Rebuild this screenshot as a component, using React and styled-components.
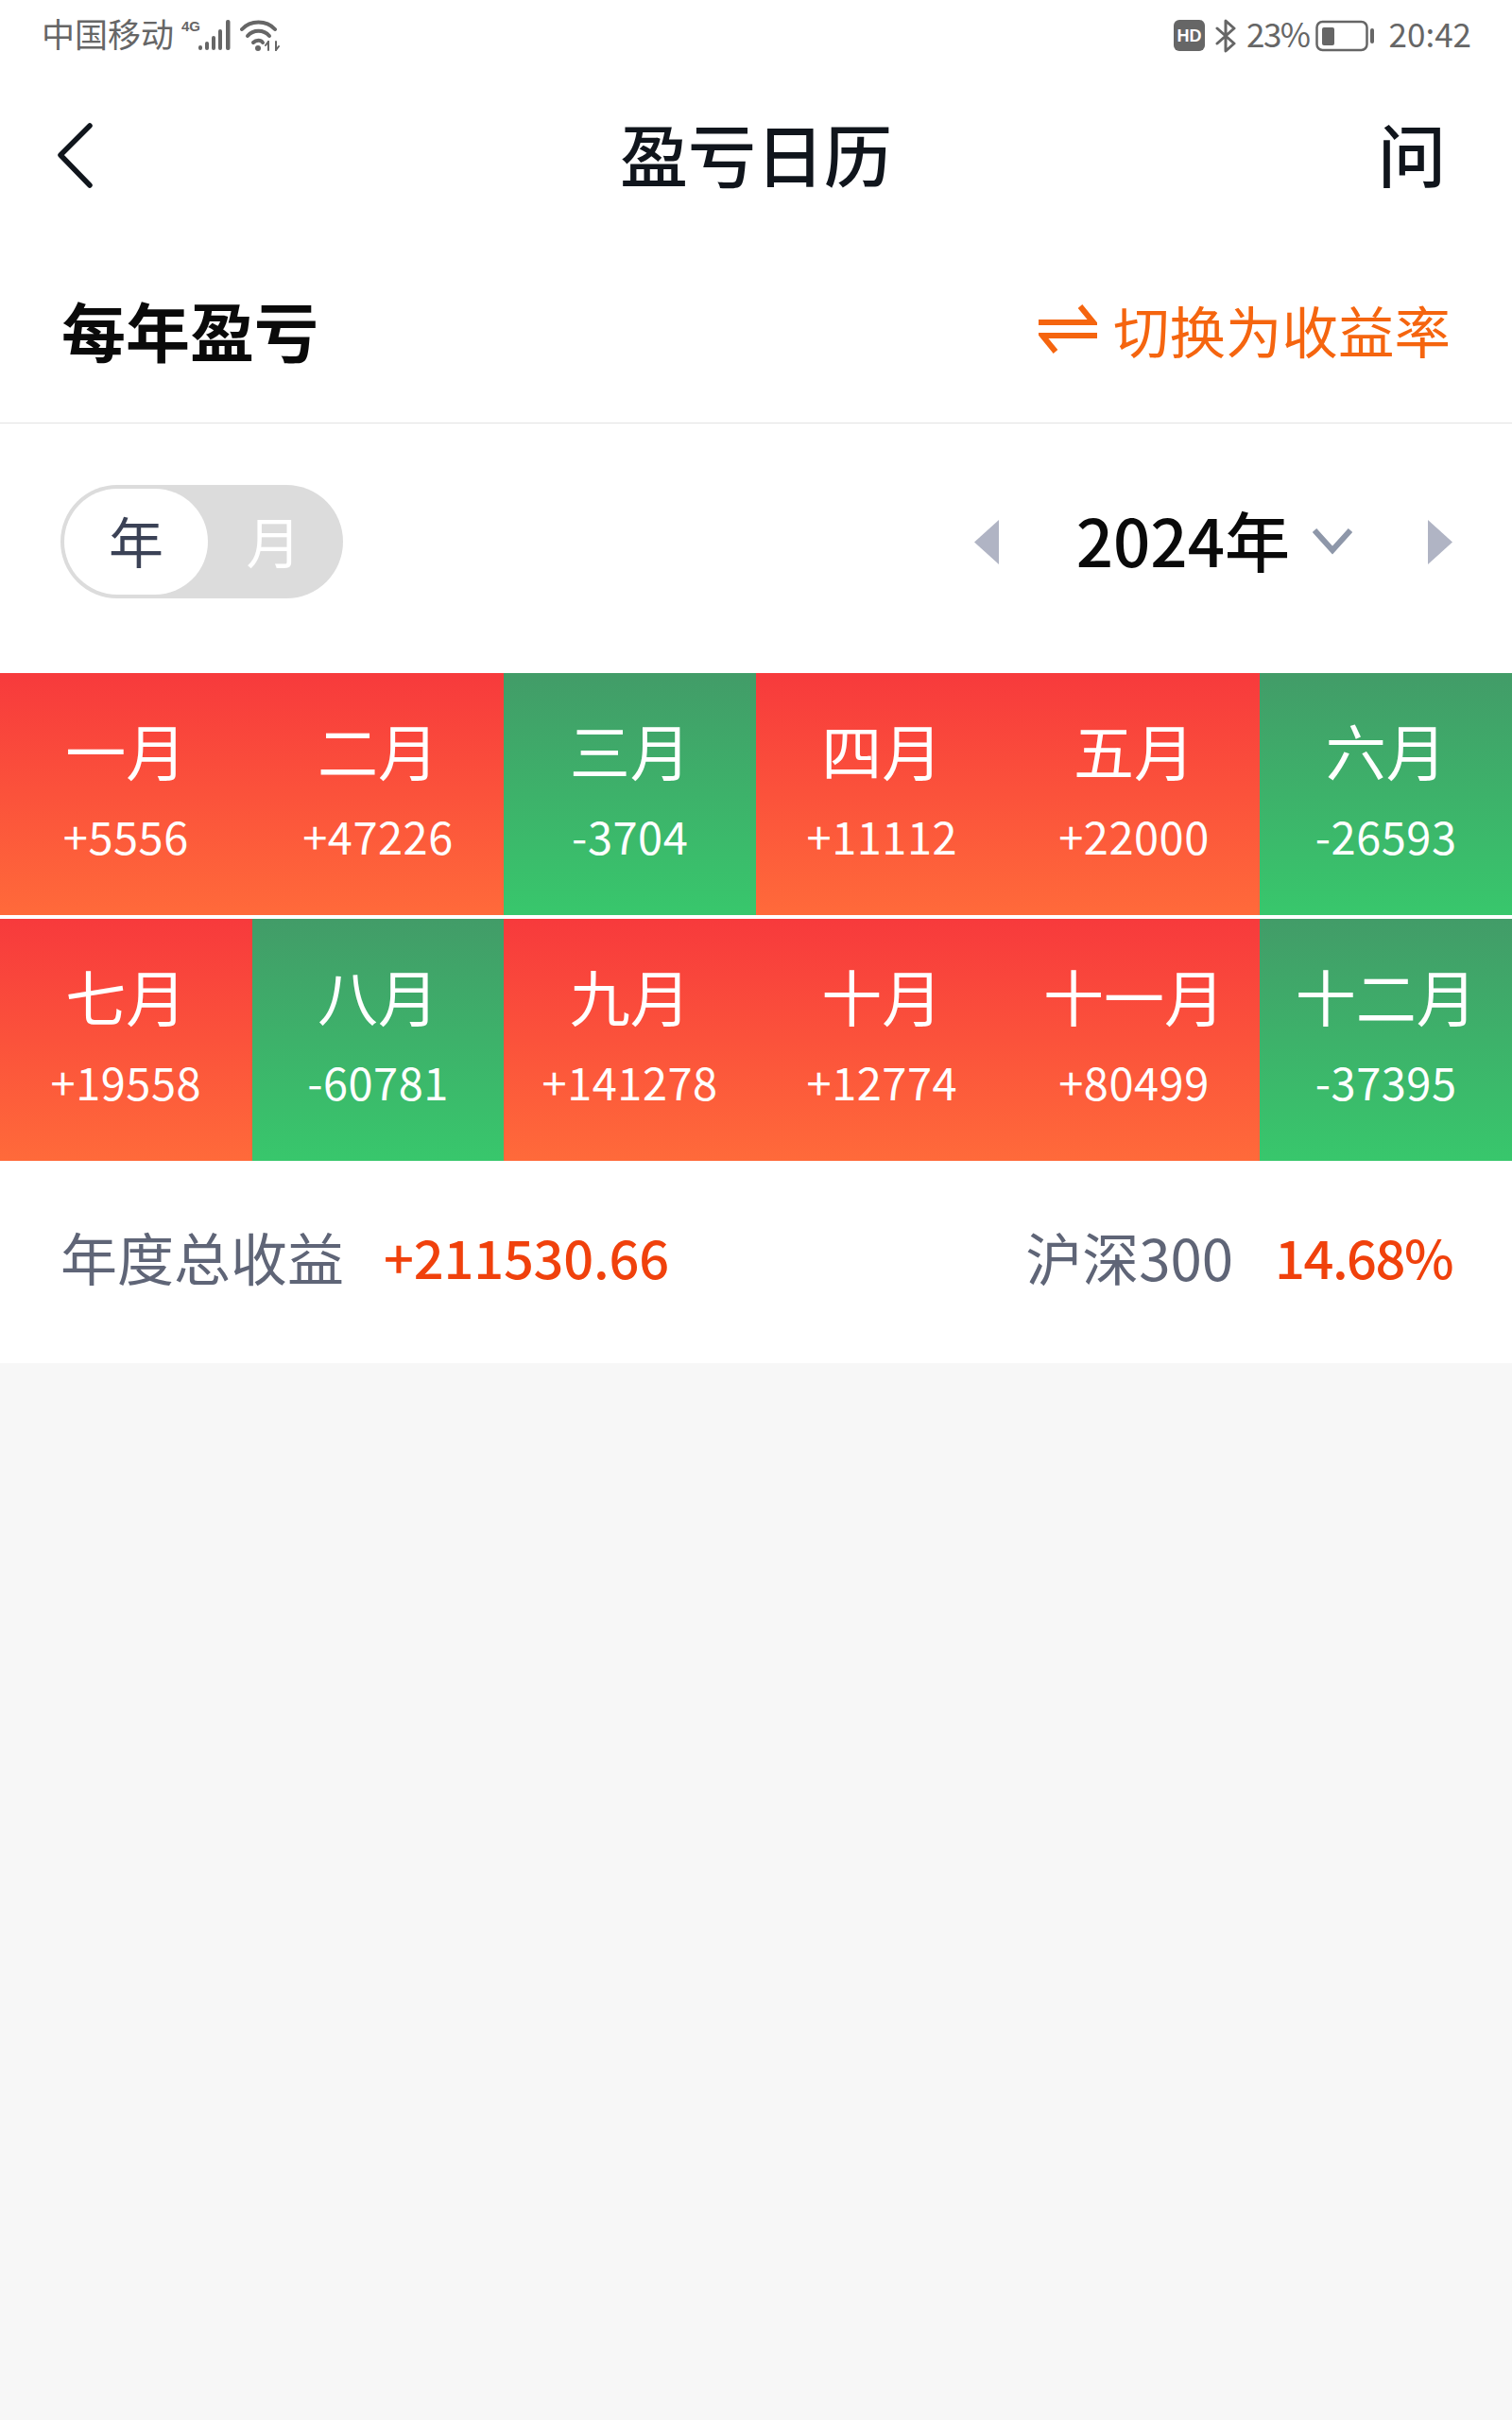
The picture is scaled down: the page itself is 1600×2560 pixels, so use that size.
import styled, { createGlobalStyle } from "styled-components"

const GlobalStyle = createGlobalStyle`
  html, body {
    margin: 0;
    padding: 0;
    background: #f7f7f7;
  }
  body {
    font-family: "Noto Sans CJK SC", "Noto Sans", sans-serif;
  }
`

const Page = styled.div`
  width: 1600px;
  height: 2560px;
  background: #f7f7f7;
`

const Panel = styled.div`
  background: #fff;
`

const StatusBar = styled.div`
  height: 75px;
  padding: 0 43px 0 44px;
  display: flex;
  align-items: center;
  justify-content: space-between;
  color: #666;
  font-size: 35px;
`

const StatusGroup = styled.div`
  display: flex;
  align-items: center;
  gap: ${props => props.$gap}px;
`

const StatusText = styled.span`
  margin-bottom: 5px;
  line-height: 40px;
  letter-spacing: ${props => props.$tight ? "-1.5px" : "0"};
`

const BatterySvg = styled.svg`
  margin: 0 5px 0 -5px;
`

const NavBar = styled.div`
  height: 180px;
  padding: 0 70px 0 58px;
  display: grid;
  grid-template-columns: 1fr auto 1fr;
  align-items: center;
`

const NavTitle = styled.div`
  margin: 0 0 8px 12px;
  font-size: 72px;
  font-weight: 500;
  color: #10151c;
  line-height: 90px;
`

const NavHelp = styled.div`
  margin-bottom: 8px;
  justify-self: end;
  font-size: 72px;
  font-weight: 500;
  color: #10151c;
  line-height: 90px;
`

const SectionHead = styled.div`
  height: 186px;
  padding: 0 65px 6px;
  display: flex;
  align-items: center;
  justify-content: space-between;
  border-bottom: 1px solid #e3e3e3;
`

const SectionTitle = styled.div`
  font-size: 68px;
  font-weight: 700;
  color: #0a0a0a;
`

const SwitchLink = styled.div`
  display: flex;
  align-items: center;
  gap: 17px;
  font-size: 59.5px;
  color: #f5650f;
`

const FilterRow = styled.div`
  height: 264px;
  padding: 0 63px 14px 64px;
  box-sizing: border-box;
  display: flex;
  align-items: center;
  justify-content: space-between;
`

const Toggle = styled.div`
  width: 299px;
  height: 120px;
  box-sizing: border-box;
  padding: 4px;
  border-radius: 60px;
  background: #dcdcdc;
  display: flex;
  align-items: center;
`

const ToggleItem = styled.div`
  width: ${props => (props.$active ? 152 : 139)}px;
  height: 112px;
  padding-bottom: 4px;
  box-sizing: border-box;
  border-radius: 56px;
  display: flex;
  align-items: center;
  justify-content: center;
  font-size: 58px;
  background: ${props => (props.$active ? "#fff" : "transparent")};
  color: ${props => (props.$active ? "#3b4256" : "#fff")};
`

const YearPicker = styled.div`
  display: flex;
  align-items: center;
`

const YearLabel = styled.div`
  margin: 0 24px 6px 82px;
  font-size: 69px;
  font-weight: 500;
  color: #0a0a0a;
  line-height: 90px;
`

const NextArrow = styled.svg`
  margin-left: 80px;
`

const MonthGrid = styled.div`
  display: grid;
  grid-template-columns: repeat(6, 1fr);
  row-gap: 4px;
`

const MonthCell = styled.div`
  height: 256px;
  display: flex;
  flex-direction: column;
  align-items: center;
  padding-top: 35px;
  box-sizing: border-box;
  color: #fff;
  background: ${props =>
    props.$gain
      ? "linear-gradient(180deg, #f73a3c 0%, #ff6a3a 100%)"
      : "linear-gradient(180deg, #429c68 0%, #38c76c 100%)"};
`

const MonthName = styled.div`
  font-size: 64px;
  font-weight: 400;
  line-height: 90px;
`

const MonthValue = styled.div`
  margin-top: 17px;
  font-size: 47px;
  line-height: 60px;
  letter-spacing: 0.5px;
`

const SummaryRow = styled.div`
  height: 214px;
  padding: 0 63px 14px 64px;
  box-sizing: border-box;
  display: flex;
  align-items: center;
  justify-content: space-between;
`

const SummaryGroup = styled.div`
  display: flex;
  align-items: center;
  gap: ${props => props.$gap}px;
`

const SummaryLabel = styled.div`
  font-size: 60px;
  color: #5f6577;
`

const SummaryValue = styled.div`
  font-size: 56px;
  font-weight: 500;
  color: #f0410c;
  letter-spacing: ${props => props.$tight ? "-1.5px" : "-0.2px"};
`

const months = [
  ["一月", "+5556"],
  ["二月", "+47226"],
  ["三月", "-3704"],
  ["四月", "+11112"],
  ["五月", "+22000"],
  ["六月", "-26593"],
  ["七月", "+19558"],
  ["八月", "-60781"],
  ["九月", "+141278"],
  ["十月", "+12774"],
  ["十一月", "+80499"],
  ["十二月", "-37395"],
]

function SignalIcon() {
  return (
    <svg width="54" height="36" viewBox="0 0 54 36" fill="#666">
      <text x="0" y="13" fontSize="15" fontWeight="700" fontFamily="Liberation Sans, sans-serif">4G</text>
      <rect x="18" y="28" width="4" height="5" rx="2" />
      <rect x="25" y="24" width="4" height="9" rx="2" />
      <rect x="32" y="18" width="4" height="15" rx="2" />
      <rect x="39" y="11" width="4" height="22" rx="2" />
      <rect x="47" y="1" width="4.5" height="32" rx="2" />
    </svg>
  )
}

function WifiIcon() {
  return (
    <svg width="42" height="36" viewBox="0 0 42 36" fill="none" stroke="#666" strokeWidth="4" strokeLinecap="round">
      <path d="M2 11C11 1 28 1 37 11" />
      <path d="M8 18C14 11 25 11 31 18" />
      <path d="M14 25C17 22 22 22 24 25" />
      <circle cx="19" cy="31" r="3" fill="#666" stroke="none" />
      <path d="M30 24v9M38 24v9" strokeWidth="2" />
      <path d="M27 28l3-4M38 33l3-4" strokeWidth="2" />
    </svg>
  )
}

function HdIcon() {
  return (
    <svg width="33" height="33" viewBox="0 0 33 33">
      <rect width="33" height="33" rx="6" fill="#666" />
      <text x="16.5" y="22.5" textAnchor="middle" fontSize="18" fontWeight="700" fill="#fff" fontFamily="Liberation Sans, sans-serif">HD</text>
    </svg>
  )
}

function BluetoothIcon() {
  return (
    <svg width="22" height="36" viewBox="0 0 22 36" fill="none" stroke="#666" strokeWidth="3" strokeLinejoin="round" strokeLinecap="round">
      <path d="M2 10L20 26L11 34V2L20 10L2 26" />
    </svg>
  )
}

function BatteryIcon() {
  return (
    <BatterySvg width="62" height="34" viewBox="0 0 62 34">
      <rect x="1.5" y="2" width="53" height="30" rx="6" fill="none" stroke="#666" strokeWidth="2.5" />
      <rect x="7" y="8" width="13" height="19" rx="2" fill="#666" />
      <rect x="58" y="9" width="4" height="16" rx="2" fill="#666" />
    </BatterySvg>
  )
}

export default function App() {
  return (
    <Page>
      <GlobalStyle />
      <Panel>
        <StatusBar>
          <StatusGroup $gap={8}>
            <StatusText>中国移动</StatusText>
            <SignalIcon />
            <WifiIcon />
          </StatusGroup>
          <StatusGroup $gap={11}>
            <HdIcon />
            <BluetoothIcon />
            <StatusText $tight>23%</StatusText>
            <BatteryIcon />
            <StatusText>20:42</StatusText>
          </StatusGroup>
        </StatusBar>
        <NavBar>
          <svg width="44" height="70" viewBox="0 0 44 70" fill="none" stroke="#10151c" strokeWidth="5.5" strokeLinecap="round" strokeLinejoin="round">
            <path d="M37 3L6 34L37 66" />
          </svg>
          <NavTitle>盈亏日历</NavTitle>
          <NavHelp>问</NavHelp>
        </NavBar>
        <SectionHead>
          <SectionTitle>每年盈亏</SectionTitle>
          <SwitchLink>
            <svg width="62" height="54" viewBox="0 0 62 54" fill="none" stroke="#f5650f" strokeWidth="6">
              <path d="M0 20H58L44 3" />
              <path d="M62 34H4L18 51" />
            </svg>
            切换为收益率
          </SwitchLink>
        </SectionHead>
        <FilterRow>
          <Toggle>
            <ToggleItem $active>年</ToggleItem>
            <ToggleItem>月</ToggleItem>
          </Toggle>
          <YearPicker>
            <svg width="26" height="47" viewBox="0 0 26 47" fill="#b0b4c4">
              <path d="M26 0V47L0 23.5Z" />
            </svg>
            <YearLabel>2024年</YearLabel>
            <svg width="42" height="30" viewBox="0 0 42 30" fill="none" stroke="#8e97a9" strokeWidth="6">
              <path d="M2 3L21 24L40 3" />
            </svg>
            <NextArrow width="26" height="47" viewBox="0 0 26 47" fill="#b0b4c4">
              <path d="M0 0V47L26 23.5Z" />
            </NextArrow>
          </YearPicker>
        </FilterRow>
        <MonthGrid>
          {months.map(([name, value]) => (
            <MonthCell key={name} $gain={value[0] === "+"}>
              <MonthName>{name}</MonthName>
              <MonthValue>{value}</MonthValue>
            </MonthCell>
          ))}
        </MonthGrid>
        <SummaryRow>
          <SummaryGroup $gap={42}>
            <SummaryLabel>年度总收益</SummaryLabel>
            <SummaryValue>+211530.66</SummaryValue>
          </SummaryGroup>
          <SummaryGroup $gap={44}>
            <SummaryLabel>沪深300</SummaryLabel>
            <SummaryValue $tight>14.68%</SummaryValue>
          </SummaryGroup>
        </SummaryRow>
      </Panel>
    </Page>
  )
}
